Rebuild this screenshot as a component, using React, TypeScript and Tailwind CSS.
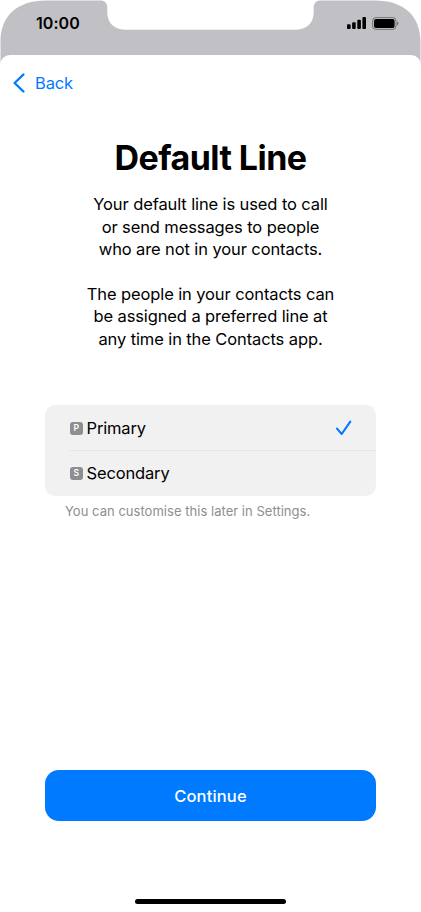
function StatusBar() {
  return (
    <header className="relative h-[55px] shrink-0">
      <svg className="absolute left-0 top-0" width="421" height="70" viewBox="0 0 421 70" aria-hidden="true">
        <path
          d="M0.5 70V42C0.5 16 17 0.5 46 0.5H100C105 0.5 107.3 3 107.3 8V12C107.3 23 114 29.7 126 29.7H295C307 29.7 313.7 23 313.7 12V8C313.7 3 316 0.5 321 0.5H375C404 0.5 420.5 16 420.5 42V70Z"
          fill="#c1c0c5"
        />
      </svg>
      <div className="relative flex h-[46px] items-center justify-between pl-[36px] pr-[22px]">
        <span className="text-[16px] font-semibold leading-5 tracking-[0.05px]">10:00</span>
        <div className="flex items-center gap-[6px]">
          <svg width="19" height="12" viewBox="0 0 19 12" aria-hidden="true">
            <rect x="0" y="7.3" width="3.6" height="4.7" rx="1" />
            <rect x="5.1" y="5.3" width="3.6" height="6.7" rx="1" />
            <rect x="10.3" y="2.8" width="3.6" height="9.2" rx="1" />
            <rect x="15.4" y="0" width="3.6" height="12" rx="1" />
          </svg>
          <svg width="27" height="13" viewBox="0 0 27 13" aria-hidden="true">
            <rect x="0.6" y="0.6" width="23.4" height="11.8" rx="3.4" fill="none" stroke="#000" strokeOpacity="0.4" strokeWidth="1" />
            <rect x="2" y="2" width="20.6" height="9" rx="2" />
            <path d="M25.2 4.6C26.8 5.2 26.8 7.8 25.2 8.4Z" fillOpacity="0.5" />
          </svg>
        </div>
      </div>
    </header>
  );
}

function LineRow({ badge, label, selected = false }: { badge: string; label: string; selected?: boolean }) {
  return (
    <div className="flex h-[45px] items-center pr-[24px]">
      <span className="mr-[4px] flex size-[12.5px] items-center justify-center rounded-[3px] bg-[#8e8d92] text-[8.5px] font-semibold leading-none text-white">
        {badge}
      </span>
      <span className="text-[16.5px] leading-[22px] tracking-[-0.15px]">{label}</span>
      {selected && (
        <svg className="ml-auto" width="17" height="16" viewBox="0 0 17 16" fill="none" aria-hidden="true">
          <path d="M2 8.6L6.7 14L15.3 1.6" stroke="#007aff" strokeWidth="2.1" strokeLinecap="round" strokeLinejoin="round" />
        </svg>
      )}
    </div>
  );
}

export default function App() {
  return (
    <div className="flex h-[912px] w-[421px] flex-col overflow-hidden bg-white font-['Inter',sans-serif] text-black">
      <StatusBar />
      <main className="relative flex flex-1 flex-col items-center rounded-t-[10px] bg-white">
        <nav className="flex h-[57px] w-full items-center pl-[13px]">
          <button className="flex items-center gap-[10px] pb-px text-[16.5px] leading-[22px] tracking-[-0.15px] text-[#007aff]">
            <svg width="12" height="20" viewBox="0 0 12 20" fill="none" aria-hidden="true">
              <path d="M10.4 1.5L1.6 10L10.4 18.5" stroke="currentColor" strokeWidth="2.4" strokeLinecap="round" strokeLinejoin="round" />
            </svg>
            Back
          </button>
        </nav>
        <h1 className="mt-[25px] text-[34px] font-bold leading-[41px] tracking-[-0.55px]">Default Line</h1>
        <div className="mt-[15.4px] flex flex-col gap-[22.4px] text-center text-[16.5px] leading-[22.4px] tracking-[-0.11px]">
          <p>
            Your default line is used to call
            <br />
            or send messages to people
            <br />
            who are not in your contacts.
          </p>
          <p>
            The people in your contacts can
            <br />
            be assigned a preferred line at
            <br />
            any time in the Contacts app.
          </p>
        </div>
        <section className="mt-[54.6px] w-[331px]">
          <div className="rounded-[10px] bg-[#f1f1f1] pl-[25px]">
            <div className="pt-px">
              <LineRow badge="P" label="Primary" selected />
            </div>
            <div className="-mt-px h-px bg-[#e5e5e6]" />
            <LineRow badge="S" label="Secondary" />
          </div>
          <p className="mt-[6px] pl-[20px] text-[13px] leading-[18px] tracking-[0.03px] text-[#8e8d92]">You can customise this later in Settings.</p>
        </section>
        <button className="mb-[78px] mt-auto h-[51px] w-[331px] rounded-[14px] bg-[#007aff] pt-px text-[16.5px] font-medium leading-[22px] tracking-[0.15px] text-white">
          Continue
        </button>
        <div className="mb-[8px] h-[5px] w-[151px] rounded-full bg-black" />
      </main>
    </div>
  );
}
